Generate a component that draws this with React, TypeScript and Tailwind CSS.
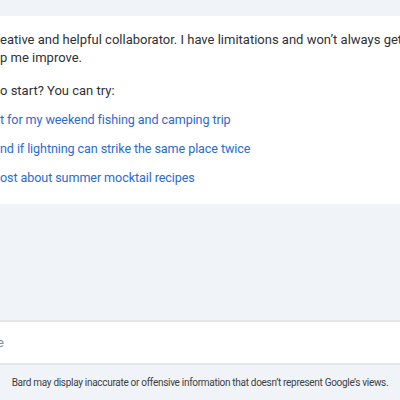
import React from "react";

const suggestions = [
  "t for my weekend fishing and camping trip",
  "nd if lightning can strike the same place twice",
  "ost about summer mocktail recipes",
];

export default function App() {
  return (
    <div
      className="w-[400px] h-[400px] overflow-hidden flex flex-col bg-[#f0f4f9] text-[#1f1f1f]"
      style={{ fontFamily: "Roboto, Arial, sans-serif" }}
    >
      {/* Top strip */}
      <div className="h-[16px] shrink-0" />

      {/* Intro card */}
      <div className="h-[188px] shrink-0 bg-white pt-[15px] whitespace-nowrap overflow-hidden">
        <p className="text-[13px] leading-[18px] text-[#303134]">
          eative and helpful collaborator. I have limitations and won’t always get it right,
          <br />
          p me improve.
        </p>
        <p className="mt-[15px] text-[13px] leading-[18px] text-[#303134]">o start? You can try:</p>
        <ul className="mt-[11px] flex flex-col gap-[11px]">
          {suggestions.map((s) => (
            <li key={s} className="text-[12.6px] leading-[18px] tracking-[-0.1px] text-[#2b6bd0]">
              {s}
            </li>
          ))}
        </ul>
      </div>

      {/* Chat area */}
      <div className="flex-1" />

      {/* Input */}
      <div className="h-[45px] shrink-0 border-y-2 border-[#e3e5e8] bg-white flex items-center">
        <span className="text-[13px] text-[#8a8d91] -ml-[3px]">e</span>
      </div>

      {/* Disclaimer */}
      <div className="h-[35px] shrink-0 flex items-center justify-center whitespace-nowrap">
        <span className="text-[10px] tracking-[-0.3px] text-[#3c4043]">
          Bard may display inaccurate or offensive information that doesn’t represent Google’s views.
        </span>
      </div>
    </div>
  );
}
